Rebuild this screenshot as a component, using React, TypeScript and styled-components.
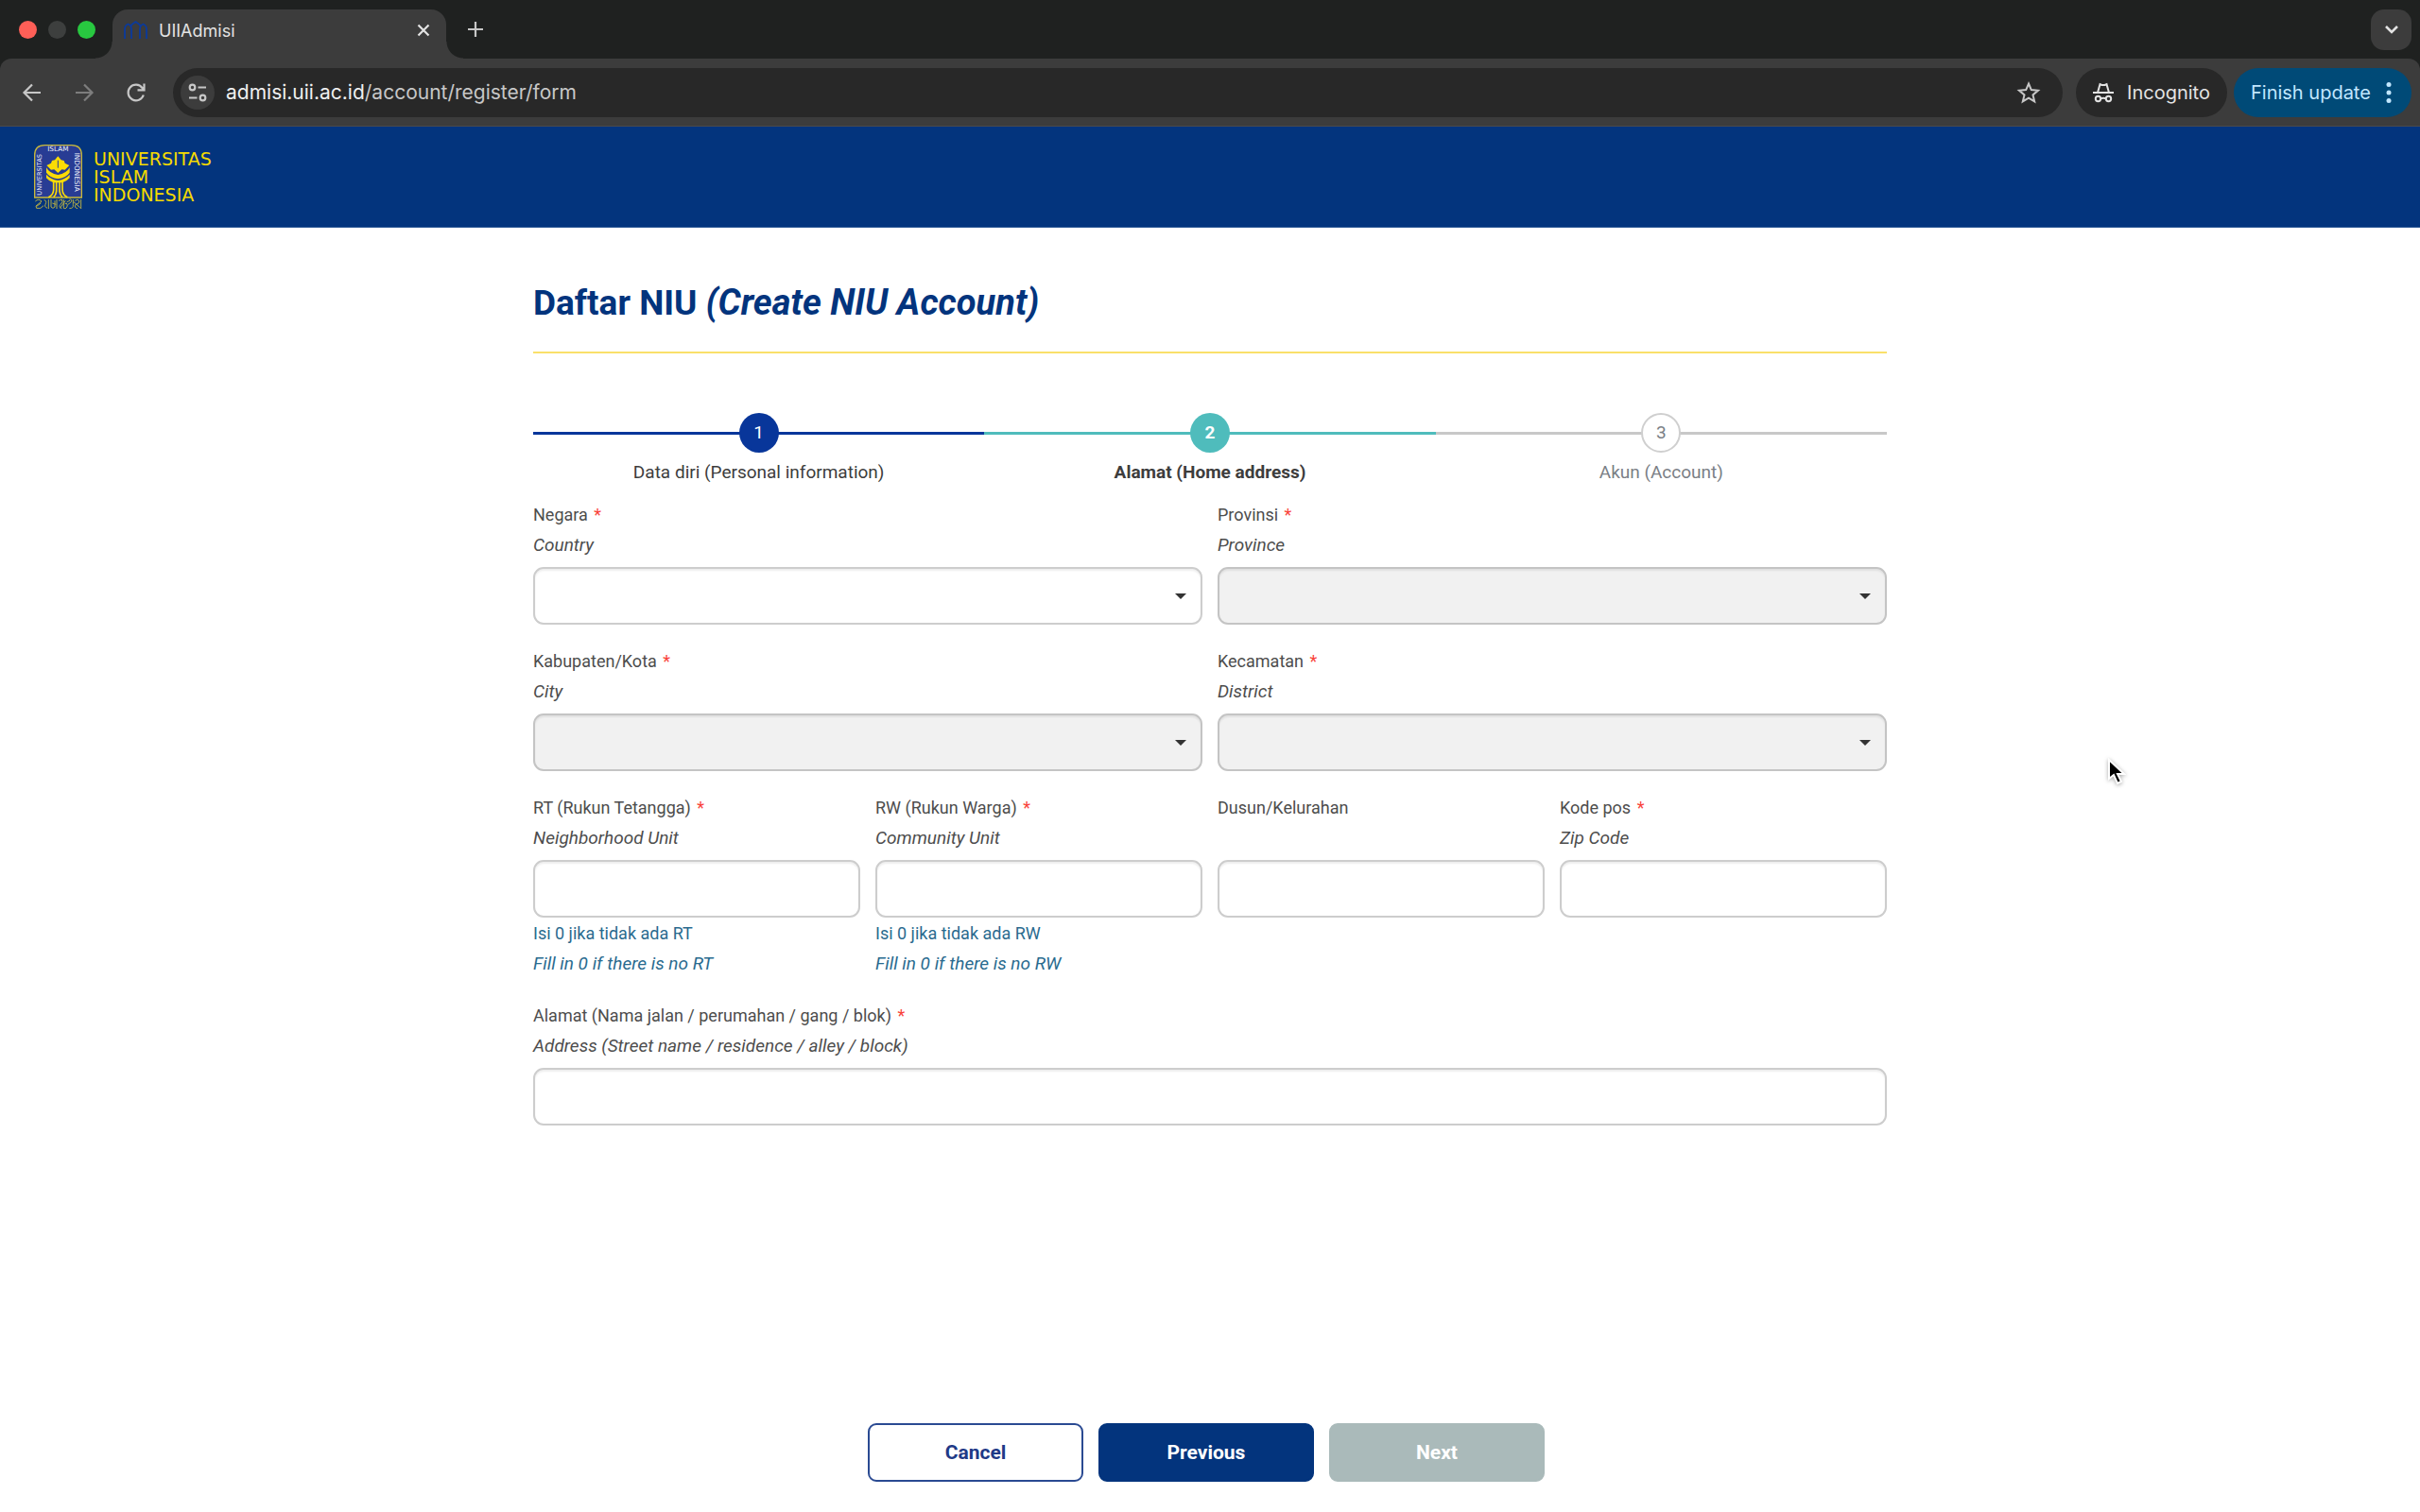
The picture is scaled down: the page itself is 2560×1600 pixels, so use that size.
import React from "react";
import styled, { createGlobalStyle, css } from "styled-components";

const GlobalStyle = createGlobalStyle`
  *, *::before, *::after { box-sizing: border-box; }
  body {
    margin: 0;
    background: #fff;
    color: #4d4d4d;
    font-family: Roboto, "Liberation Sans", sans-serif;
  }
  button, input, select { font: inherit; }
`;

const Page = styled.div`
  display: flex;
  flex-direction: column;
  min-height: 100vh;
`;

/* ---------- Browser window ---------- */

const Browser = styled.header`
  background: #1f2120;
  color: #e3e3e3;
  font-family: Inter, "Liberation Sans", sans-serif;
`;

const TabStrip = styled.div`
  display: flex;
  align-items: flex-end;
  height: 62px;
  padding: 0 9px 0 20px;
`;

const Lights = styled.div`
  display: flex;
  align-items: center;
  gap: 12px;
  height: 62px;
  width: 99px;
`;

const Light = styled.span<{ $color: string }>`
  width: 19px;
  height: 19px;
  border-radius: 50%;
  background: ${(p) => p.$color};
`;

const Tab = styled.div`
  position: relative;
  display: flex;
  align-items: center;
  gap: 12px;
  width: 353px;
  height: 52px;
  padding: 0 14px 8px 12px;
  border-radius: 16px 16px 0 0;
  background: #3c3c3c;
  font-size: 18px;

  &::before,
  &::after {
    content: "";
    position: absolute;
    bottom: 0;
    width: 18px;
    height: 18px;
  }
  &::before {
    right: 100%;
    background: radial-gradient(circle at 0 0, transparent 17px, #3c3c3c 18px);
  }
  &::after {
    left: 100%;
    background: radial-gradient(circle at 100% 0, transparent 17px, #3c3c3c 18px);
  }
`;

const TabTitle = styled.span`
  flex: 1;
`;

const IconButton = styled.button<{ $dim?: boolean }>`
  display: grid;
  place-items: center;
  padding: 0;
  border: 0;
  background: none;
  color: ${(p) => (p.$dim ? "#7d7d7d" : "#c7c7c7")};
`;

const NewTab = styled(IconButton)`
  height: 62px;
  width: 30px;
  margin-left: 16px;
`;

const TabSearch = styled(IconButton)`
  align-self: center;
  width: 43px;
  height: 43px;
  margin-left: auto;
  border-radius: 14px;
  background: #3c3c3c;
  color: #e3e3e3;
`;

const Toolbar = styled.div`
  display: flex;
  align-items: center;
  height: 72px;
  padding: 0 9px 0 20px;
  border-bottom: 1px solid #4a4a4a;
  border-radius: 12px 12px 0 0;
  background: #3c3c3c;
  font-size: 21px;
`;

const Nav = styled.nav`
  display: flex;
  gap: 27px;
  margin-right: 25px;

  button {
    width: 28px;
    height: 28px;
  }
`;

const Omnibox = styled.div`
  display: flex;
  flex: 1;
  align-items: center;
  height: 52px;
  padding: 0 22px 0 8px;
  border-radius: 26px;
  background: #282828;
`;

const SiteInfo = styled(IconButton)`
  width: 36px;
  height: 36px;
  margin-right: 12px;
  border-radius: 50%;
  background: #3c3c3c;
`;

const Address = styled.span`
  flex: 1;
  color: #c7c7c7;

  b {
    color: #f0f0f0;
    font-weight: 400;
  }
`;

const Incognito = styled.div`
  display: flex;
  align-items: center;
  justify-content: center;
  gap: 14px;
  width: 160px;
  height: 52px;
  margin: 0 7px 0 14px;
  border-radius: 26px;
  background: #282828;
  font-size: 20px;
`;

const UpdateButton = styled.button`
  display: flex;
  align-items: center;
  justify-content: space-between;
  width: 188px;
  height: 52px;
  padding: 0 21px 0 18px;
  border: 0;
  border-radius: 26px;
  background: #004a77;
  color: #c2e7ff;
  && { font-size: 20px; }
`;

/* ---------- Site header ---------- */

const SiteHeader = styled.header`
  display: flex;
  align-items: center;
  height: 107px;
  padding: 0 36px;
  border-bottom: 1px solid #2f5a97;
  background: #03347d;
`;

const Brand = styled.a`
  display: flex;
  align-items: center;
  gap: 12px;
  color: #f5da00;
  font-family: "DejaVu Sans", sans-serif;
  font-size: 19px;
  line-height: 19px;
  text-decoration: none;
`;

/* ---------- Form ---------- */

const Main = styled.main`
  flex: 1;
  width: 100%;
  max-width: 1480px;
  margin: 0 auto;
  padding: 52px 24px 0;
`;

const Title = styled.h1`
  margin: 0;
  height: 81px;
  border-bottom: 2px solid #fae06a;
  color: #03347d;
  font-size: 37px;
  font-weight: 700;
  line-height: 56px;

  em { font-size: 38px; line-height: 1; }
`;

const Steps = styled.ol`
  display: grid;
  grid-template-columns: repeat(3, 1fr);
  margin: 63px 0 0;
  padding: 0;
  list-style: none;
`;

type StepState = "done" | "active" | "todo";
const stepLine = { done: "#08369a", active: "#4fbcbc", todo: "#c8c8c8" };

const Step = styled.li<{ $state: StepState }>`
  display: flex;
  flex-direction: column;
  align-items: center;
  background: linear-gradient(${(p) => stepLine[p.$state]}, ${(p) => stepLine[p.$state]}) 0 20px / 100% 3px no-repeat;
  color: ${(p) => (p.$state === "todo" ? "#7b7f86" : "#3d3d3d")};
  font-size: 19px;
  font-weight: ${(p) => (p.$state === "active" ? 700 : 400)};
  line-height: 32px;
`;

const StepNumber = styled.span<{ $state: StepState }>`
  display: grid;
  place-items: center;
  width: 42px;
  height: 42px;
  margin-bottom: 5px;
  border-radius: 50%;
  background: ${(p) => stepLine[p.$state]};
  color: #fff;
  ${(p) =>
    p.$state === "todo" &&
    css`
      border: 2px solid #cfcfcf;
      background: #fff;
      color: #7b7f86;
    `}
`;

const Fields = styled.form`
  display: grid;
  grid-template-columns: repeat(4, 1fr);
  gap: 23px 16px;
  margin-top: 13px;
`;

const FieldBox = styled.div<{ $span: number }>`
  grid-column: span ${(p) => p.$span};
  font-size: 18px;
  line-height: 32px;

  em { display: block; font-size: 19px; }
`;

const Label = styled.label`
  display: block;
  height: 64px;
  margin-bottom: 7px;
`;

const Required = styled.span`
  margin-left: 2px;
  color: #f9423a;
`;

const control = css`
  display: block;
  width: 100%;
  height: 61px;
  padding: 0 16px;
  border: 2px solid #cdcdcd;
  border-radius: 11px;
  background: #fff;
  box-shadow: inset 0 2px 2px rgba(0, 0, 0, 0.07);
  color: #3d3d3d;
`;

const TextInput = styled.input`
  ${control}
`;

const Select = styled.select`
  ${control}
  grid-area: 1 / 1;
  appearance: none;
  opacity: 1;

  &:disabled {
    border-color: #c4c4c4;
    background: #f1f1f1;
  }
`;

const SelectWrap = styled.div`
  display: grid;
  align-items: center;

  &::after {
    content: "";
    grid-area: 1 / 1;
    justify-self: end;
    margin-right: 17px;
    border: 6px solid transparent;
    border-top-color: #333;
    border-bottom: 0;
    pointer-events: none;
  }
`;

const Hint = styled.p`
  margin: 1px 0 0;
  color: #2a6b8f;
`;

const Actions = styled.footer`
  display: flex;
  justify-content: center;
  gap: 16px;
  padding: 24px 8px 32px 0;
`;

const Action = styled.button<{ $kind: "outline" | "solid" | "muted" }>`
  width: 228px;
  height: 62px;
  border: 2px solid #03347d;
  border-radius: 9px;
  background: #03347d;
  color: #fff;
  && { font-size: 21px; font-weight: 700; }
  ${(p) =>
    p.$kind === "outline" &&
    css`
      border-color: #2a4a92;
      background: #fff;
      color: #1f3a87;
    `}
  ${(p) =>
    p.$kind === "muted" &&
    css`
      border-color: #aababa;
      background: #aababa;
    `}
`;

const Pointer = styled.svg`
  position: absolute;
  left: 2229px;
  top: 802px;
  filter: drop-shadow(0 1px 2px rgba(0, 0, 0, 0.35));
  pointer-events: none;
`;

/* ---------- Drawings ---------- */

const stroke = { fill: "none", stroke: "currentColor" };

const Favicon = () => (
  <svg width="25" height="20" viewBox="0 0 25 20" fill="none" stroke="#0b3a9c" strokeWidth="1.8">
    <path d="M1 19V9Q1 5 4.500 3.500Q8 5 8 9V19M17 19V9Q17 5 20.500 3.500Q24 5 24 9V19M7 6Q9 3 12.500 1Q16 3 18 6" />
  </svg>
);

const Emblem = () => (
  <svg width="51" height="69" viewBox="0 0 153 207" role="img" aria-label="Universitas Islam Indonesia">
    <path d="M2 168V34Q2 2 34 2H119Q151 2 151 34V168Z" fill="#283c94" stroke="#c9b93c" strokeWidth="4" />
    <g fill="#eef0fa" fontFamily="DejaVu Sans, sans-serif">
      <text x="76" y="22" textAnchor="middle" fontSize="22">ISLAM</text>
      <text transform="translate(23 161) rotate(-90)" fontSize="20">UNIVERSITAS</text>
      <text transform="translate(129 26) rotate(90)" fontSize="22">INDONESIA</text>
    </g>
    <g fill="#fbdc04">
      <path d="M76 37L86 49L95 51L98 59L112 66L98 80L88 79L76 90L64 79L54 80L40 66L54 59L57 51L66 49Z" />
      <path d="M39 73Q49 92 76 96Q103 92 113 73V89Q103 104 76 109Q49 104 39 89Z" />
      <path d="M39 95Q52 110 76 114Q100 110 113 95V106Q104 117 90 121H62Q48 117 39 106Z" />
    </g>
    <path d="M62 118V144Q61 160 46 167M71 118V148Q70 160 62 167M81 118V148Q82 160 90 167M90 118V144Q91 160 106 167" fill="none" stroke="#fbdc04" strokeWidth="5" />
    <path d="M76 50V74" stroke="#283c94" strokeWidth="3" />
    <path d="M4 180Q14 170 24 180L12 190Q2 194 8 202Q22 206 30 194M32 176Q42 178 36 190Q30 196 42 202M46 174V204M54 174V198Q60 206 66 198V178M72 174V204M78 178L88 174Q94 182 84 190Q76 198 88 203M94 174V202Q104 206 106 192Q104 182 98 188M112 174Q122 172 118 182L108 190M112 202Q126 204 124 190V174M130 178Q140 170 144 180Q142 190 132 190Q126 200 138 203M149 174V204M8 196L22 186M58 186L70 190M82 202L100 178M104 182L114 178M126 182L146 200" fill="none" stroke="#b5ac45" strokeWidth="3" />
  </svg>
);

/* ---------- Data-driven parts ---------- */

type FieldProps = {
  id: string;
  label: string;
  english?: string;
  required?: boolean;
  span?: number;
  kind?: "text" | "select";
  disabled?: boolean;
  hint?: [string, string];
};

const fields: FieldProps[] = [
  { id: "negara", label: "Negara", english: "Country", required: true, span: 2, kind: "select" },
  { id: "provinsi", label: "Provinsi", english: "Province", required: true, span: 2, kind: "select", disabled: true },
  { id: "kota", label: "Kabupaten/Kota", english: "City", required: true, span: 2, kind: "select", disabled: true },
  { id: "kecamatan", label: "Kecamatan", english: "District", required: true, span: 2, kind: "select", disabled: true },
  { id: "rt", label: "RT (Rukun Tetangga)", english: "Neighborhood Unit", required: true, hint: ["Isi 0 jika tidak ada RT", "Fill in 0 if there is no RT"] },
  { id: "rw", label: "RW (Rukun Warga)", english: "Community Unit", required: true, hint: ["Isi 0 jika tidak ada RW", "Fill in 0 if there is no RW"] },
  { id: "dusun", label: "Dusun/Kelurahan" },
  { id: "kodepos", label: "Kode pos", english: "Zip Code", required: true },
  { id: "alamat", label: "Alamat (Nama jalan / perumahan / gang / blok)", english: "Address (Street name / residence / alley / block)", required: true, span: 4 },
];

const steps: { label: string; state: StepState }[] = [
  { label: "Data diri (Personal information)", state: "done" },
  { label: "Alamat (Home address)", state: "active" },
  { label: "Akun (Account)", state: "todo" },
];

function Field({ id, label, english, required, span = 1, kind = "text", disabled, hint }: FieldProps) {
  return (
    <FieldBox $span={span}>
      <Label htmlFor={id}>
        {label} {required && <Required>*</Required>}
        {english && <em>{english}</em>}
      </Label>
      {kind === "select" ? (
        <SelectWrap>
          <Select id={id} disabled={disabled} defaultValue="">
            <option value="" />
          </Select>
        </SelectWrap>
      ) : (
        <TextInput id={id} type="text" />
      )}
      {hint && (
        <Hint>
          {hint[0]}
          <em>{hint[1]}</em>
        </Hint>
      )}
    </FieldBox>
  );
}

function BrowserChrome() {
  return (
    <Browser>
      <TabStrip>
        <Lights>
          <Light $color="#ff5f57" />
          <Light $color="#3d3f3e" />
          <Light $color="#28c840" />
        </Lights>
        <Tab>
          <Favicon />
          <TabTitle>UIIAdmisi</TabTitle>
          <IconButton aria-label="Close tab">
            <svg width="20" height="20" viewBox="0 0 20 20" {...stroke} stroke="#e3e3e3" strokeWidth="2.2"><path d="M4.500 4.500L15.500 15.500M15.500 4.500L4.500 15.500" /></svg>
          </IconButton>
        </Tab>
        <NewTab aria-label="New tab">
          <svg width="18" height="18" viewBox="0 0 18 18" {...stroke} strokeWidth="2.200"><path d="M9 1V17M1 9H17" /></svg>
        </NewTab>
        <TabSearch aria-label="Search tabs">
          <svg width="16" height="12" viewBox="0 0 16 12" {...stroke} strokeWidth="2.600"><path d="M2 3L8 9L14 3" /></svg>
        </TabSearch>
      </TabStrip>
      <Toolbar>
        <Nav>
          <IconButton aria-label="Back">
            <svg width="22" height="22" viewBox="0 0 22 22" {...stroke} strokeWidth="2.200"><path d="M20 11H3M11 2.500L2.500 11L11 19.500" /></svg>
          </IconButton>
          <IconButton aria-label="Forward" $dim>
            <svg width="22" height="22" viewBox="0 0 22 22" {...stroke} strokeWidth="2.200"><path d="M2 11H19M11 2.500L19.500 11L11 19.500" /></svg>
          </IconButton>
          <IconButton aria-label="Reload">
            <svg width="22" height="22" viewBox="0 0 22 22" {...stroke} strokeWidth="2.200"><path d="M18.800 13.500A8.300 8.300 0 1 1 17.500 6L19 8M19.500 1.500V8.300H12.500" /></svg>
          </IconButton>
        </Nav>
        <Omnibox>
          <SiteInfo aria-label="View site information">
            <svg width="20" height="20" viewBox="0 0 20 20" {...stroke} strokeWidth="2.200"><circle cx="4.500" cy="4.500" r="2.800" /><path d="M10.500 4.500H19M1 15.500H9.500" /><circle cx="15.500" cy="15.500" r="2.800" /></svg>
          </SiteInfo>
          <Address><b>admisi.uii.ac.id</b>/account/register/form</Address>
          <IconButton aria-label="Bookmark this tab">
            <svg width="28" height="28" viewBox="0 0 28 28" {...stroke} strokeWidth="2"><path d="M14 4.500L16.800 11.100L24 11.700L18.500 16.400L20.200 23.400L14 19.700L7.800 23.400L9.500 16.400L4 11.700L11.200 11.100Z" /></svg>
          </IconButton>
        </Omnibox>
        <Incognito>
          <svg width="22" height="22" viewBox="0 0 22 22" {...stroke} strokeWidth="2"><path d="M0 11H22M5 11L7.500 2.200L9.500 3H12.500L14.500 2.200L17 11M8 17.500Q11 16 14 17.500" /><circle cx="5.500" cy="17.500" r="2.700" /><circle cx="16.500" cy="17.500" r="2.700" /></svg>
          <span>Incognito</span>
        </Incognito>
        <UpdateButton>
          <span>Finish update</span>
          <svg width="6" height="22" viewBox="0 0 6 22" fill="currentColor"><circle cx="3" cy="2.600" r="2.500" /><circle cx="3" cy="11" r="2.500" /><circle cx="3" cy="19.400" r="2.500" /></svg>
        </UpdateButton>
      </Toolbar>
    </Browser>
  );
}

export default function App() {
  return (
    <Page>
      <GlobalStyle />
      <BrowserChrome />
      <SiteHeader>
        <Brand href="#">
          <Emblem />
          <span>
            UNIVERSITAS
            <br />
            ISLAM
            <br />
            INDONESIA
          </span>
        </Brand>
      </SiteHeader>
      <Main>
        <Title>
          Daftar NIU <em>(Create NIU Account)</em>
        </Title>
        <Steps>
          {steps.map((step, i) => (
            <Step key={step.label} $state={step.state}>
              <StepNumber $state={step.state}>{i + 1}</StepNumber>
              {step.label}
            </Step>
          ))}
        </Steps>
        <Fields>
          {fields.map((field) => (
            <Field key={field.id} {...field} />
          ))}
        </Fields>
      </Main>
      <Actions>
        <Action type="button" $kind="outline">Cancel</Action>
        <Action type="button" $kind="solid">Previous</Action>
        <Action type="button" $kind="muted" disabled>Next</Action>
      </Actions>
      <Pointer width="20" height="30" viewBox="0 0 20 30" aria-hidden="true">
        <path d="M2 2V22L7 18L11 27L15 25L11 17H18Z" fill="#000" stroke="#fff" strokeWidth="2" />
      </Pointer>
    </Page>
  );
}
